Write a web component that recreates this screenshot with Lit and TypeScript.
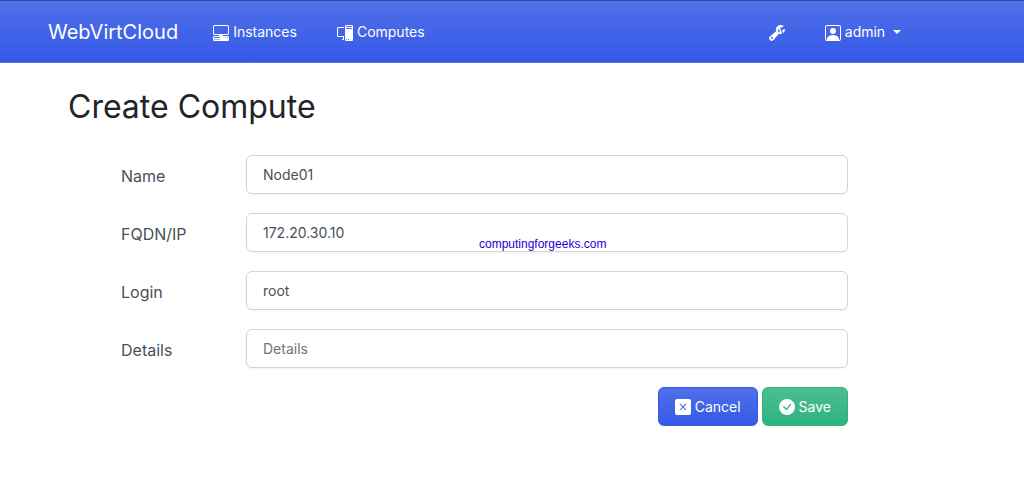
import { LitElement, html, css, svg } from "lit";
import { customElement, property } from "lit/decorators.js";

const icons = {
  instances: svg`<path d="M1.5 0A1.5 1.5 0 0 0 0 1.5v7A1.5 1.5 0 0 0 1.5 10H6v1H1a1 1 0 0 0-1 1v3a1 1 0 0 0 1 1h14a1 1 0 0 0 1-1v-3a1 1 0 0 0-1-1h-5v-1h4.5A1.5 1.5 0 0 0 16 8.5v-7A1.5 1.5 0 0 0 14.5 0zm0 1h13a.5.5 0 0 1 .5.5v7a.5.5 0 0 1-.5.5h-13a.5.5 0 0 1-.5-.5v-7a.5.5 0 0 1 .5-.5M12 12.5a.5.5 0 1 1 1 0 .5.5 0 0 1-1 0m2 0a.5.5 0 1 1 1 0 .5.5 0 0 1-1 0M1.5 12h5a.5.5 0 0 1 0 1h-5a.5.5 0 0 1 0-1M1 14.25a.25.25 0 0 1 .25-.25h5.5a.25.25 0 1 1 0 .5h-5.5a.25.25 0 0 1-.25-.25"/>`,
  computes: svg`<path d="M8 1a1 1 0 0 1 1-1h6a1 1 0 0 1 1 1v14a1 1 0 0 1-1 1H9a1 1 0 0 1-1-1zm1 13.5a.5.5 0 1 0 1 0 .5.5 0 0 0-1 0m2 0a.5.5 0 1 0 1 0 .5.5 0 0 0-1 0M9.5 1a.5.5 0 0 0 0 1h5a.5.5 0 0 0 0-1zM9 3.5a.5.5 0 0 0 .5.5h5a.5.5 0 0 0 0-1h-5a.5.5 0 0 0-.5.5M1.5 2A1.5 1.5 0 0 0 0 3.5v7A1.5 1.5 0 0 0 1.5 12H6v2h-.5a.5.5 0 0 0 0 1H7v-4H1.5a.5.5 0 0 1-.5-.5v-7a.5.5 0 0 1 .5-.5H7V2z"/>`,
  wrench: svg`<path d="M16 4.5a4.492 4.492 0 0 1-1.703 3.526L13 5l2.959-1.11c.027.2.041.403.041.61Z"/><path d="M11.5 9c.653 0 1.273-.139 1.833-.39L12 5.5 11 3l3.826-1.53A4.5 4.5 0 0 0 7.29 6.092l-6.116 5.096a2.583 2.583 0 1 0 3.638 3.638L9.908 8.71A4.49 4.49 0 0 0 11.5 9Zm-1.292-4.361-.596.893.809-.27a.25.25 0 0 1 .287.377l-.596.893.809-.27.158.475-1.5.5a.25.25 0 0 1-.287-.376l.596-.893-.809.27a.25.25 0 0 1-.287-.377l.596-.893-.809.27-.158-.475 1.5-.5a.25.25 0 0 1 .287.376ZM3 14a1 1 0 1 1 0-2 1 1 0 0 1 0 2Z"/>`,
  person: svg`<path d="M11 6a3 3 0 1 1-6 0 3 3 0 0 1 6 0"/><path d="M2 0a2 2 0 0 0-2 2v12a2 2 0 0 0 2 2h12a2 2 0 0 0 2-2V2a2 2 0 0 0-2-2zm12 1a1 1 0 0 1 1 1v12a1 1 0 0 1-1 1v-1c0-1-1-4-6-4s-6 3-6 4v1a1 1 0 0 1-1-1V2a1 1 0 0 1 1-1z"/>`,
  cancel: svg`<path d="M2 0a2 2 0 0 0-2 2v12a2 2 0 0 0 2 2h12a2 2 0 0 0 2-2V2a2 2 0 0 0-2-2zm3.354 4.646L8 7.293l2.646-2.647a.5.5 0 0 1 .708.708L8.707 8l2.647 2.646a.5.5 0 0 1-.708.708L8 8.707l-2.646 2.647a.5.5 0 0 1-.708-.708L7.293 8 4.646 5.354a.5.5 0 1 1 .708-.708"/>`,
  save: svg`<path d="M16 8A8 8 0 1 1 0 8a8 8 0 0 1 16 0m-3.97-3.03a.75.75 0 0 0-1.08.022L7.477 9.417 5.384 7.323a.75.75 0 0 0-1.06 1.06L6.97 11.03a.75.75 0 0 0 1.079-.02l3.992-4.99a.75.75 0 0 0-.01-1.05z"/>`,
};

type IconName = keyof typeof icons;

@customElement("bi-icon")
export class BiIcon extends LitElement {
  @property() name: IconName = "instances";

  static styles = css`
    :host {
      display: block;
      flex: none;
      width: 16px;
      height: 16px;
    }
    .glyph {
      display: block;
      width: 100%;
      height: 100%;
      fill: currentColor;
    }
  `;

  render() {
    return html`<svg class="glyph" viewBox="0 0 16 16" aria-hidden="true">${icons[this.name]}</svg>`;
  }
}

@customElement("nav-bar")
export class NavBar extends LitElement {
  static styles = css`
    :host {
      display: block;
    }
    .bar {
      display: flex;
      align-items: center;
      box-sizing: border-box;
      min-height: 63px;
      padding: 0 12% 0 48px;
      color: #fff;
      background: linear-gradient(180deg, #5070e9, #3459e6);
      border-top: 1px solid #2f479c;
      border-bottom: 1px solid #5b74dc;
      font-size: 14px;
      line-height: 24px;
    }
    .brand {
      margin-right: 35px;
      color: inherit;
      font-size: 20px;
      text-decoration: none;
    }
    .links {
      display: flex;
      flex: 1;
      gap: 40px;
    }
    .tools {
      display: flex;
      gap: 40px;
    }
    .item {
      display: flex;
      align-items: center;
      gap: 4px;
      padding: 0;
      border: 0;
      background: none;
      color: inherit;
      font: inherit;
      text-decoration: none;
    }
    .item bi-icon {
      margin-top: 2px;
    }
    .caret {
      margin-left: 4px;
      border: 4px solid transparent;
      border-top-color: currentColor;
      border-bottom: 0;
    }
  `;

  render() {
    return html`
      <nav class="bar">
        <a class="brand" href="#">WebVirtCloud</a>
        <div class="links">
          <a class="item" href="#instances"><bi-icon name="instances"></bi-icon>Instances</a>
          <a class="item" href="#computes"><bi-icon name="computes"></bi-icon>Computes</a>
        </div>
        <div class="tools">
          <button class="item" type="button" aria-label="Settings"><bi-icon name="wrench"></bi-icon></button>
          <button class="item" type="button" aria-haspopup="true">
            <bi-icon name="person"></bi-icon>admin<span class="caret"></span>
          </button>
        </div>
      </nav>
    `;
  }
}

interface Field {
  id: string;
  label: string;
  value: string;
}

@customElement("app-root")
export class AppRoot extends LitElement {
  private fields: Field[] = [
    { id: "name", label: "Name", value: "Node01" },
    { id: "hostname", label: "FQDN/IP", value: "172.20.30.10" },
    { id: "login", label: "Login", value: "root" },
    { id: "details", label: "Details", value: "" },
  ];

  static styles = css`
    :host {
      display: block;
      position: relative;
      min-height: 100vh;
      background: #fff;
      color: #212529;
      font-family: Inter, "Liberation Sans", sans-serif;
    }
    .page {
      padding: 24px 68px;
    }
    .title {
      margin: 0 0 28px;
      font-size: 32px;
      font-weight: 400;
      line-height: 40px;
    }
    .form {
      display: grid;
      gap: 19px;
      margin: 0 108px 0 53px;
    }
    .row {
      display: grid;
      grid-template-columns: 125px 1fr;
      align-items: center;
    }
    .label {
      padding-top: 2px;
      color: #495057;
      font-size: 16px;
      line-height: 24px;
    }
    .input {
      box-sizing: border-box;
      width: 100%;
      height: 39px;
      padding: 0 16px;
      border: 1px solid #ced4da;
      border-radius: 6px;
      background: #fff;
      box-shadow: 0 1px 2px rgba(0, 0, 0, 0.05);
      color: #495057;
      font: inherit;
      font-size: 14px;
    }
    .input::placeholder {
      color: #6c757d;
      opacity: 1;
    }
    .actions {
      display: flex;
      justify-content: flex-end;
      gap: 4px;
    }
    .btn {
      display: flex;
      align-items: center;
      gap: 4px;
      height: 39px;
      padding: 0 16px;
      border: 1px solid #3459e6;
      border-radius: 6px;
      background: linear-gradient(180deg, #5070e9, #3459e6);
      color: #fff;
      font: inherit;
      font-size: 14px;
    }
    .save {
      border-color: #2fb380;
      background: linear-gradient(180deg, #4bbd92, #2fb380);
    }
    .credit {
      position: absolute;
      top: 237px;
      left: 479px;
      color: #1a00d8;
      font-family: "Liberation Sans", Arial, sans-serif;
      font-size: 12px;
      line-height: 15px;
      text-decoration: none;
    }
  `;

  render() {
    return html`
      <nav-bar></nav-bar>
      <main class="page">
        <h2 class="title">Create Compute</h2>
        <form class="form" @submit=${(e: Event) => e.preventDefault()}>
          ${this.fields.map(
            (f) => html`
              <div class="row">
                <label class="label" for=${f.id}>${f.label}</label>
                <input class="input" type="text" id=${f.id} name=${f.id} .value=${f.value} placeholder=${f.label} />
              </div>
            `
          )}
          <div class="actions">
            <button class="btn" type="button"><bi-icon name="cancel"></bi-icon>Cancel</button>
            <button class="btn save" type="submit"><bi-icon name="save"></bi-icon>Save</button>
          </div>
        </form>
      </main>
      <a class="credit" href="#credit">computingforgeeks.com</a>
    `;
  }
}
